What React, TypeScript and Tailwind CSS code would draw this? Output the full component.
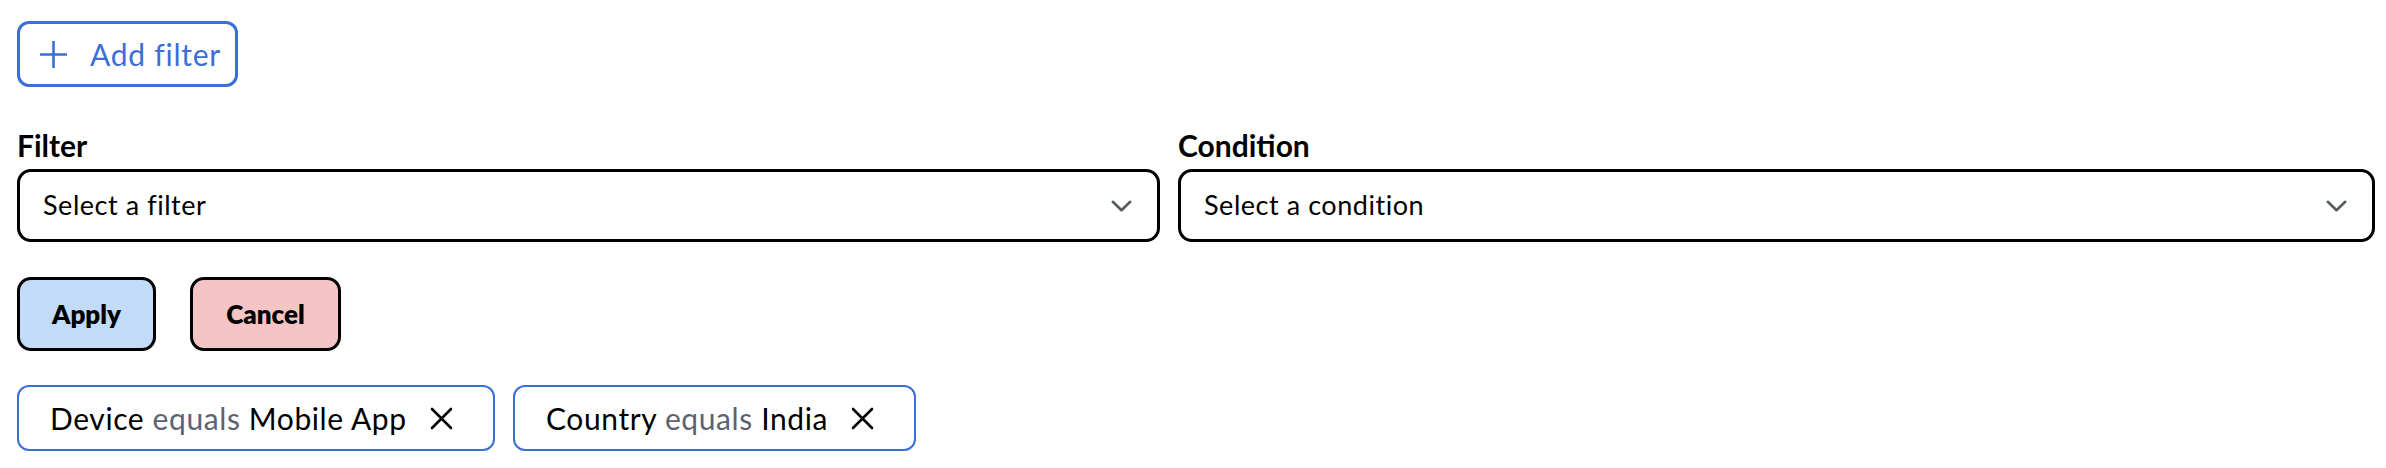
import { useState } from "react";

type Chip = { id: string; field: string; op: string; value: string; width: string };

const initialChips: Chip[] = [
  { id: "device", field: "Device", op: "equals", value: "Mobile App", width: "w-[478px]" },
  { id: "country", field: "Country", op: "equals", value: "India", width: "w-[403px]" },
];

function Chevron() {
  return (
    <svg
      className="h-[12px] w-[21px] shrink-0"
      viewBox="0 0 21 12"
      fill="none"
      stroke="#555a62"
      strokeWidth={2.6}
      strokeLinecap="round"
      strokeLinejoin="round"
    >
      <path d="M1.8 1.8l8.7 8.4 8.7-8.4" />
    </svg>
  );
}

function SelectBox({ label, placeholder, width }: { label: string; placeholder: string; width: string }) {
  return (
    <div className={`flex shrink-0 flex-col ${width}`}>
      <label className="text-[30px] font-bold leading-[36px] text-black">{label}</label>
      <button
        type="button"
        className="mt-[6px] flex h-[73px] items-center justify-between rounded-[14px] border-[3px] border-black bg-white pl-[23px] pr-[25px] text-left"
      >
        <span className="text-[27px] tracking-[0.02em] text-black">{placeholder}</span>
        <Chevron />
      </button>
    </div>
  );
}

export default function App() {
  const [chips, setChips] = useState(initialChips);

  return (
    <div className="min-h-screen bg-white pl-[17px] pr-[11px] pt-[21px] font-['Lato','Noto_Sans',sans-serif]">
      {/* Add filter */}
      <button
        type="button"
        className="flex h-[66px] w-[221px] items-center gap-[22px] rounded-[12px] border-[3px] border-[#3a6fd8] pl-[19px] text-[#3a6fd8]"
      >
        <svg className="h-[29px] w-[29px]" viewBox="0 0 29 29" fill="none" stroke="currentColor" strokeWidth={2.6}>
          <path d="M14.5 1v27M1 14.5h27" />
        </svg>
        <span className="text-[30px] leading-none tracking-[0.025em]">Add filter</span>
      </button>

      {/* Filter + condition */}
      <div className="mt-[40px] flex gap-[18px]">
        <SelectBox label="Filter" placeholder="Select a filter" width="w-[1143px]" />
        <SelectBox label="Condition" placeholder="Select a condition" width="w-[1197px]" />
      </div>

      {/* Actions */}
      <div className="mt-[35px] flex gap-[34px]">
        <button
          type="button"
          className="h-[74px] w-[139px] rounded-[14px] border-[3px] border-black bg-[#c2dbf8] text-[26px] font-extrabold text-black"
        >
          Apply
        </button>
        <button
          type="button"
          className="h-[74px] w-[151px] rounded-[14px] border-[3px] border-black bg-[#f5c5c5] text-[26px] font-extrabold text-black"
        >
          Cancel
        </button>
      </div>

      {/* Active filters */}
      <div className="mt-[34px] flex gap-[18px]">
        {chips.map((chip) => (
          <div
            key={chip.id}
            className={`flex h-[66px] items-center justify-between rounded-[12px] border-2 border-[#3a6fd8] pl-[31px] pr-[40px] ${chip.width}`}
          >
            <span className="text-[30px] tracking-[0.02em] text-black">
              {chip.field} <span className="text-[#5c6370]">{chip.op}</span> {chip.value}
            </span>
            <button
              type="button"
              aria-label="Remove filter"
              onClick={() => setChips((c) => c.filter((x) => x.id !== chip.id))}
            >
              <svg className="h-[23px] w-[23px]" viewBox="0 0 23 23" fill="none" stroke="black" strokeWidth={2.6} strokeLinecap="round">
                <path d="M2 2l19 19M21 2L2 21" />
              </svg>
            </button>
          </div>
        ))}
      </div>
    </div>
  );
}
